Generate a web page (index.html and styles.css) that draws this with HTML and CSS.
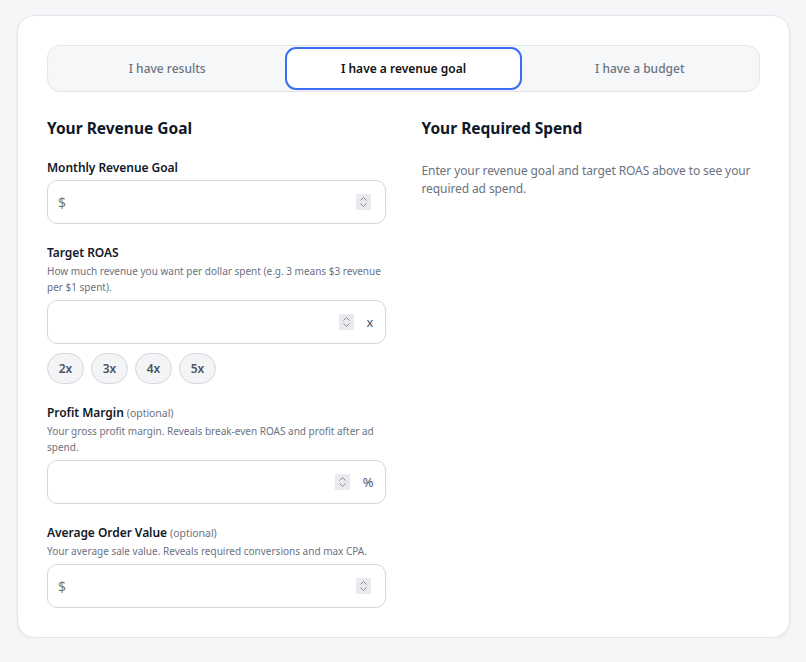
FILE: index.html
```html
<!DOCTYPE html>
<html lang="en">
<head>
<meta charset="utf-8">
<title>ROAS Calculator</title>
<link rel="stylesheet" href="styles.css">
</head>
<body>
<div class="card">
  <div class="tabs">
    <button class="tab">I have results</button>
    <button class="tab active">I have a revenue goal</button>
    <button class="tab">I have a budget</button>
  </div>
  <div class="cols">
    <div class="col">
      <h2 class="heading">Your Revenue Goal</h2>

      <div class="field first">
        <label class="label">Monthly Revenue Goal</label>
        <div class="input">
          <span class="prefix">$</span>
          <input class="control" type="text">
          <span class="spin"><svg width="9" height="12" viewBox="0 0 9 12"><path d="M1.5 4.5 L4.5 1.5 L7.5 4.5 M1.5 7.5 L4.5 10.5 L7.5 7.5" fill="none" stroke="#8a8d96" stroke-width="1"/></svg></span>
        </div>
      </div>

      <div class="field">
        <label class="label">Target ROAS</label>
        <p class="help">How much revenue you want per dollar spent (e.g. 3 means $3 revenue per $1 spent).</p>
        <div class="input">
          <input class="control" type="text">
          <span class="spin"><svg width="9" height="12" viewBox="0 0 9 12"><path d="M1.5 4.5 L4.5 1.5 L7.5 4.5 M1.5 7.5 L4.5 10.5 L7.5 7.5" fill="none" stroke="#8a8d96" stroke-width="1"/></svg></span>
          <span class="suffix">x</span>
        </div>
        <div class="chips">
          <button class="chip">2x</button>
          <button class="chip">3x</button>
          <button class="chip">4x</button>
          <button class="chip">5x</button>
        </div>
      </div>

      <div class="field">
        <label class="label">Profit Margin <span class="opt">(optional)</span></label>
        <p class="help">Your gross profit margin. Reveals break-even ROAS and profit after ad spend.</p>
        <div class="input">
          <input class="control" type="text">
          <span class="spin"><svg width="9" height="12" viewBox="0 0 9 12"><path d="M1.5 4.5 L4.5 1.5 L7.5 4.5 M1.5 7.5 L4.5 10.5 L7.5 7.5" fill="none" stroke="#8a8d96" stroke-width="1"/></svg></span>
          <span class="suffix">%</span>
        </div>
      </div>

      <div class="field">
        <label class="label">Average Order Value <span class="opt">(optional)</span></label>
        <p class="help">Your average sale value. Reveals required conversions and max CPA.</p>
        <div class="input">
          <span class="prefix">$</span>
          <input class="control" type="text">
          <span class="spin"><svg width="9" height="12" viewBox="0 0 9 12"><path d="M1.5 4.5 L4.5 1.5 L7.5 4.5 M1.5 7.5 L4.5 10.5 L7.5 7.5" fill="none" stroke="#8a8d96" stroke-width="1"/></svg></span>
        </div>
      </div>
    </div>

    <div class="col">
      <h2 class="heading">Your Required Spend</h2>
      <p class="empty">Enter your revenue goal and target ROAS above to see your required ad spend.</p>
    </div>
  </div>
</div>
</body>
</html>
```

FILE: styles.css
```css
* { box-sizing: border-box; }

body {
  margin: 0;
  padding: 15px 16px 0 17px;
  background: #f5f6f8;
  font-family: "Noto Sans", "Open Sans", sans-serif;
  color: #111827;
}

.card {
  background: #fff;
  border: 1px solid #e4e6ea;
  border-radius: 18px;
  padding: 29px 29px 29px 29px;
  box-shadow: 0 1px 3px rgba(0,0,0,0.07);
}

.tabs {
  display: grid;
  grid-template-columns: 1fr 1fr 1fr;
  background: #f6f7f9;
  border: 1px solid #e3e5e9;
  border-radius: 13px;
  padding: 1px;
}

.tab {
  font-family: inherit;
  font-size: 12px;
  font-weight: 500;
  color: #6b7280;
  background: transparent;
  border: 2px solid transparent;
  border-radius: 11px;
  height: 43px;
  padding-top: 1px;
  cursor: pointer;
}

.tab.active {
  background: #fff;
  border-color: #3b6ef0;
  color: #111;
  font-weight: 600;
}

.cols {
  display: grid;
  grid-template-columns: 1fr 1fr;
  gap: 36px;
  margin-top: 24px;
}

.heading {
  margin: 0;
  font-size: 15.5px;
  line-height: 24px;
  font-weight: 700;
  color: #0f172a;
}

.field { margin-top: 20px; }
.field.first { margin-top: 19px; }

.label {
  display: block;
  font-size: 12px;
  line-height: 18px;
  font-weight: 600;
  letter-spacing: -0.05px;
  color: #111827;
  margin-bottom: 3px;
}

.opt {
  font-size: 10.5px;
  font-weight: 400;
  color: #6b7280;
}

.help {
  margin: -2px 0 5px;
  font-size: 10px;
  line-height: 16px;
  color: #6b7280;
}

.input {
  display: flex;
  align-items: center;
  height: 44px;
  border: 1px solid #d4d6db;
  border-radius: 10px;
  padding: 0 14px 0 10px;
  background: #fff;
}

.prefix {
  font-size: 14px;
  color: #7b7a66;
  margin-right: 4px;
}

.control {
  flex: 1;
  min-width: 0;
  border: 0;
  outline: none;
  background: transparent;
  font-family: inherit;
  font-size: 14px;
  height: 100%;
}

.spin {
  display: flex;
  align-items: center;
  justify-content: center;
  width: 15px;
  height: 16px;
  background: #e9e9ee;
}

.suffix {
  margin-left: 13px;
  margin-right: -3px;
  font-size: 13px;
  color: #4b5563;
}

.chips {
  display: flex;
  gap: 7px;
  margin-top: 9px;
}

.chip {
  font-family: inherit;
  width: 37px;
  height: 31px;
  border: 1px solid #d4d6db;
  border-radius: 16px;
  background: #f3f4f6;
  color: #4b5563;
  font-size: 12px;
  font-weight: 600;
  padding: 0;
}

.empty {
  margin: 22px 0 0;
  font-size: 12px;
  line-height: 18px;
  letter-spacing: -0.1px;
  color: #6b7280;
}
```
